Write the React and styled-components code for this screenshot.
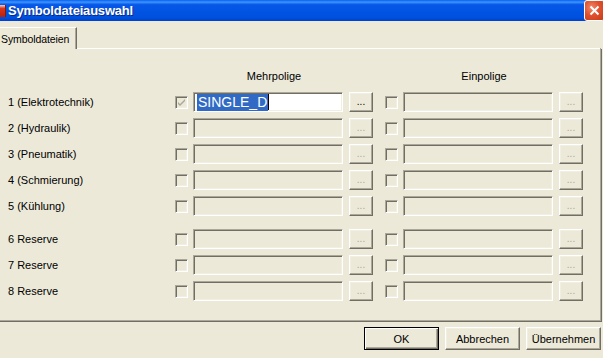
import React from 'react';
import styled, { createGlobalStyle } from 'styled-components';

const GlobalStyle = createGlobalStyle`
  html, body {
    margin: 0;
    padding: 0;
    overflow: hidden;
    background: #ECE9D8;
  }
  body {
    font-family: "Liberation Sans", Arial, sans-serif;
    font-size: 11px;
    color: #000;
  }
`;

const Window = styled.div`
  width: 603px;
  height: 358px;
  display: flex;
  flex-direction: column;
  background: #ECE9D8;
  overflow: hidden;
`;

const TitleBar = styled.div`
  height: 21px;
  flex: none;
  display: flex;
  align-items: center;
  background: linear-gradient(to bottom, #0A5FF0 0%, #3D95FF 10%, #0758E8 22%, #0053E1 60%, #0050DD 85%, #003DD0 100%);
`;

const AppIcon = styled.div`
  width: 5px;
  height: 12px;
  margin-top: 1px;
  background: linear-gradient(to bottom, #f3d0c8 0%, #d8341c 30%, #b8200c 100%);
  border-right: 1px solid #7a1a08;
`;

const Title = styled.div`
  margin-left: 2px;
  flex: 1;
  color: #fff;
  font-family: "Liberation Sans", Arial, sans-serif;
  font-weight: bold;
  font-size: 13px;
  letter-spacing: -0.2px;
  text-shadow: 1px 1px 0 #0A2A8A;
`;

const CloseButton = styled.div`
  width: 19px;
  height: 19px;
  margin-right: -2px;
  margin-top: -1px;
  border: 1px solid #fff;
  border-radius: 3px;
  background: radial-gradient(circle at 35% 35%, #f08a6a 0%, #e0502e 45%, #c43a18 100%);
  display: flex;
  align-items: center;
  justify-content: center;
`;

const Body = styled.div`
  flex: 1;
  display: flex;
  flex-direction: column;
`;

const TabStrip = styled.div`
  height: 28px;
  flex: none;
  display: flex;
  align-items: flex-end;
`;

const Tab = styled.div`
  width: 77px;
  height: 22px;
  padding-left: 1px;
  box-sizing: border-box;
  display: flex;
  align-items: center;
  font-size: 10.5px;
  letter-spacing: -0.1px;
  white-space: nowrap;
  border-top: 1px solid #fff;
  border-right: 1px solid #716F64;
  box-shadow: inset -1px 0 0 #ACA899;
`;

const TabFill = styled.div`
  flex: 1;
  height: 1px;
  background: #fff;
  margin-right: 2px;
  border-right: 1px solid #ACA899;
`;

const Panel = styled.div`
  height: 273px;
  flex: none;
  box-sizing: border-box;
  width: 602px;
  padding: 18px 0 0 8px;
  border-right: 1px solid #716F64;
  border-bottom: 1px solid #716F64;
  box-shadow: inset -1px -1px 0 #ACA899;
`;

const Row = styled.div`
  display: flex;
  align-items: center;
  height: ${p => (p.$header ? 17 : 20)}px;
  margin-top: ${p => p.$top}px;
`;

const Label = styled.div`
  width: 167px;
  flex: none;
  white-space: nowrap;
`;

const Group = styled.div`
  display: flex;
  align-items: center;
  width: 198px;
  margin-left: ${p => (p.$second ? 12 : 0)}px;
`;

const HeaderCell = styled.div`
  width: 198px;
  text-align: center;
  margin-left: ${p => (p.$second ? 12 : 0)}px;
`;

const CheckBox = styled.div`
  width: 13px;
  height: 13px;
  box-sizing: border-box;
  flex: none;
  margin-right: 5px;
  border: 1px solid;
  border-color: #ACA899 #fff #fff #ACA899;
  box-shadow: inset 1px 1px 0 #716F64, inset -1px -1px 0 #F1EFE2;
  display: flex;
  align-items: center;
  justify-content: center;
`;

const TextBox = styled.div`
  width: 150px;
  height: 20px;
  flex: none;
  box-sizing: border-box;
  margin-right: 6px;
  border: 1px solid;
  border-color: #ACA899 #fff #fff #ACA899;
  box-shadow: inset 1px 1px 0 #716F64, inset -1px -1px 0 #F1EFE2;
  background: ${p => (p.$enabled ? '#fff' : '#ECE9D8')};
  display: flex;
  align-items: center;
  padding-left: 3px;
`;

const Selected = styled.span`
  background: #316AC5;
  color: #fff;
  font-size: 14px;
  line-height: 17px;
  padding: 0 1px;
`;

const Caret = styled.span`
  width: 1px;
  height: 16px;
  background: #000;
`;

const Browse = styled.div`
  width: 24px;
  height: 20px;
  flex: none;
  box-sizing: border-box;
  border: 1px solid;
  border-color: #fff #716F64 #716F64 #fff;
  box-shadow: inset -1px -1px 0 #ACA899, inset 1px 1px 0 #F1EFE2;
  display: flex;
  align-items: flex-end;
  justify-content: center;
  padding-bottom: 4px;
  font-size: 10px;
  line-height: 10px;
  color: ${p => (p.$enabled ? '#000' : '#ACA899')};
`;

const Footer = styled.div`
  flex: 1;
  display: flex;
  justify-content: flex-end;
  align-items: flex-start;
  gap: 6px;
  padding: 5px 2px 0 0;
`;

const DialogButton = styled.div`
  width: 75px;
  height: 23px;
  box-sizing: border-box;
  display: flex;
  align-items: center;
  justify-content: center;
  border: 1px solid;
  border-color: ${p => (p.$default ? '#000' : '#fff #716F64 #716F64 #fff')};
  box-shadow: ${p =>
    p.$default
      ? 'inset 1px 1px 0 #fff, inset -1px -1px 0 #716F64, inset -2px -2px 0 #ACA899'
      : 'inset -1px -1px 0 #ACA899, inset 1px 1px 0 #F1EFE2'};
`;

const rows = [
  { label: '1 (Elektrotechnik)', active: true },
  { label: '2 (Hydraulik)' },
  { label: '3 (Pneumatik)' },
  { label: '4 (Schmierung)' },
  { label: '5 (Kühlung)' },
  { label: '6 Reserve', gapBefore: true },
  { label: '7 Reserve' },
  { label: '8 Reserve' },
];

function Check() {
  return (
    <svg width="9" height="9" viewBox="0 0 9 9">
      <path d="M1 4 L3 6 L8 1 L8 3 L3 8 L1 6 Z" fill="#ACA899" />
    </svg>
  );
}

export default function App() {
  return (
    <Window>
      <GlobalStyle />
      <TitleBar>
        <AppIcon />
        <Title>Symboldateiauswahl</Title>
        <CloseButton>
          <svg width="11" height="11" viewBox="0 0 11 11">
            <path d="M1.5 1.5 L9.5 9.5 M9.5 1.5 L1.5 9.5" stroke="#fff" strokeWidth="2" />
          </svg>
        </CloseButton>
      </TitleBar>
      <Body>
        <TabStrip>
          <Tab>Symboldateien</Tab>
          <TabFill />
        </TabStrip>
        <Panel>
          <Row $header $top={0}>
            <Label />
            <HeaderCell>Mehrpolige</HeaderCell>
            <HeaderCell $second>Einpolige</HeaderCell>
          </Row>
          {rows.map((r, i) => (
            <Row key={r.label} $top={i === 0 ? 8 : r.gapBefore ? 13 : 6}>
              <Label>{r.label}</Label>
              <Group>
                <CheckBox>{r.active && <Check />}</CheckBox>
                <TextBox $enabled={r.active}>
                  {r.active && (
                    <>
                      <Selected>SINGLE_D</Selected>
                      <Caret />
                    </>
                  )}
                </TextBox>
                <Browse $enabled={r.active}>...</Browse>
              </Group>
              <Group $second>
                <CheckBox />
                <TextBox />
                <Browse>...</Browse>
              </Group>
            </Row>
          ))}
        </Panel>
        <Footer>
          <DialogButton $default>OK</DialogButton>
          <DialogButton>Abbrechen</DialogButton>
          <DialogButton>Übernehmen</DialogButton>
        </Footer>
      </Body>
    </Window>
  );
}
